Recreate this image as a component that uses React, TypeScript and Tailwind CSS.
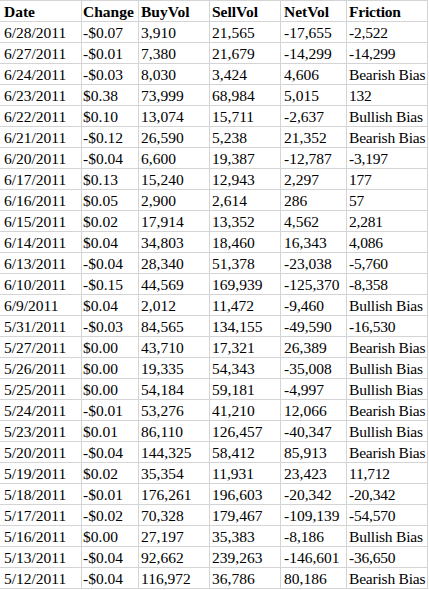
import React from "react";

const header = ["Date", "Change", "BuyVol", "SellVol", "NetVol", "Friction"];

const rows: string[][] = [
  ["6/28/2011", "-$0.07", "3,910", "21,565", "-17,655", "-2,522"],
  ["6/27/2011", "-$0.01", "7,380", "21,679", "-14,299", "-14,299"],
  ["6/24/2011", "-$0.03", "8,030", "3,424", "4,606", "Bearish Bias"],
  ["6/23/2011", "$0.38", "73,999", "68,984", "5,015", "132"],
  ["6/22/2011", "$0.10", "13,074", "15,711", "-2,637", "Bullish Bias"],
  ["6/21/2011", "-$0.12", "26,590", "5,238", "21,352", "Bearish Bias"],
  ["6/20/2011", "-$0.04", "6,600", "19,387", "-12,787", "-3,197"],
  ["6/17/2011", "$0.13", "15,240", "12,943", "2,297", "177"],
  ["6/16/2011", "$0.05", "2,900", "2,614", "286", "57"],
  ["6/15/2011", "$0.02", "17,914", "13,352", "4,562", "2,281"],
  ["6/14/2011", "$0.04", "34,803", "18,460", "16,343", "4,086"],
  ["6/13/2011", "-$0.04", "28,340", "51,378", "-23,038", "-5,760"],
  ["6/10/2011", "-$0.15", "44,569", "169,939", "-125,370", "-8,358"],
  ["6/9/2011", "$0.04", "2,012", "11,472", "-9,460", "Bullish Bias"],
  ["5/31/2011", "-$0.03", "84,565", "134,155", "-49,590", "-16,530"],
  ["5/27/2011", "$0.00", "43,710", "17,321", "26,389", "Bearish Bias"],
  ["5/26/2011", "$0.00", "19,335", "54,343", "-35,008", "Bullish Bias"],
  ["5/25/2011", "$0.00", "54,184", "59,181", "-4,997", "Bullish Bias"],
  ["5/24/2011", "-$0.01", "53,276", "41,210", "12,066", "Bearish Bias"],
  ["5/23/2011", "$0.01", "86,110", "126,457", "-40,347", "Bullish Bias"],
  ["5/20/2011", "-$0.04", "144,325", "58,412", "85,913", "Bearish Bias"],
  ["5/19/2011", "$0.02", "35,354", "11,931", "23,423", "11,712"],
  ["5/18/2011", "-$0.01", "176,261", "196,603", "-20,342", "-20,342"],
  ["5/17/2011", "-$0.02", "70,328", "179,467", "-109,139", "-54,570"],
  ["5/16/2011", "$0.00", "27,197", "35,383", "-8,186", "Bullish Bias"],
  ["5/13/2011", "-$0.04", "92,662", "239,263", "-146,601", "-36,650"],
  ["5/12/2011", "-$0.04", "116,972", "36,786", "80,186", "Bearish Bias"],
];

const colClasses = [
  "w-[82px] pl-[4px]",
  "w-[57px] pl-[1px]",
  "w-[71px] pl-[2px]",
  "w-[71px] pl-[2px]",
  "w-[66px] pl-[3px]",
  "w-[81px] pl-[2px] tracking-[-0.2px]",
];

function Row({ cells, bold }: { cells: string[]; bold?: boolean }) {
  return (
    <div className="flex h-[21px] border-b border-[#d4d4d4]">
      {cells.map((c, i) => (
        <div
          key={i}
          className={`${colClasses[i]} shrink-0 border-r border-[#d4d4d4] flex items-center overflow-hidden whitespace-nowrap leading-none pt-[1px] ${
            bold ? "font-bold" : ""
          }`}
        >
          {c}
        </div>
      ))}
    </div>
  );
}

export default function App() {
  return (
    <div
      className="w-[429px] h-[590px] bg-white text-black text-[15.5px] overflow-hidden"
      style={{ fontFamily: '"Liberation Serif", "Times New Roman", serif' }}
    >
      <div className="border-t border-[#d4d4d4] w-[428px]">
        <Row cells={header} bold />
        {rows.map((r, i) => (
          <Row key={i} cells={r} />
        ))}
      </div>
    </div>
  );
}
